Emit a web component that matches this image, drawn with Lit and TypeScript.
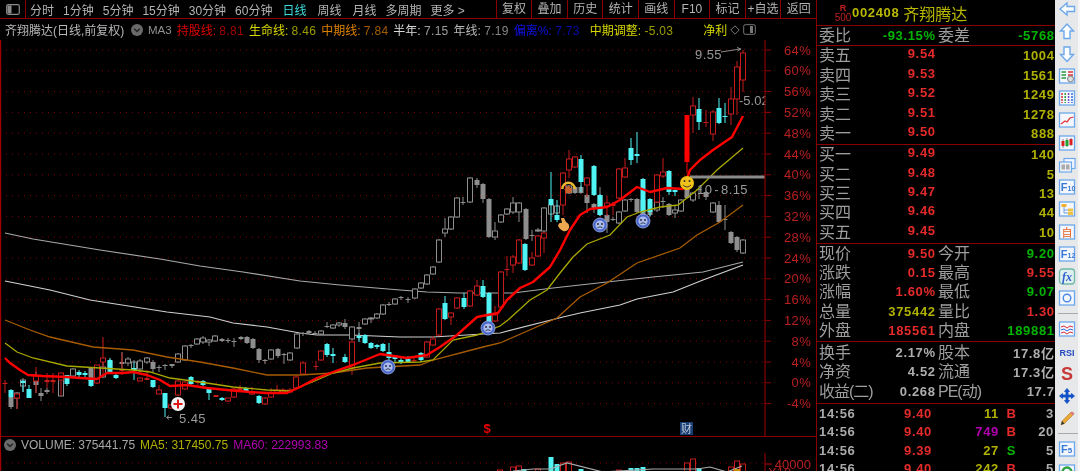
import { LitElement, html, css, svg } from "lit";
import { customElement } from "lit/decorators.js";

type C = [number, number, number, number, number, string];

const GRAY: C[] = [
  [11,396,397,407,409,"G"],[17,392,393,398,409,"g"],[23,378,380,386,392,"g"],[36,372,376,385,393,"G"],
  [41,388,393,396,401,"G"],[47,388,390,392,394,"G"],[61,373,374,396,396,"g"],[73,368,369,376,377,"g"],
  [91,367,368,381,386,"G"],[103,362,367,377,378,"g"],[110,359,361,368,372,"G"],[122,352,362,364,368,"G"],
  [128,357,359,363,366,"g"],[134,360,362,370,372,"g"],[140,359,361,369,372,"g"],[147,357,358,362,364,"g"],
  [153,360,362,369,372,"G"],[159,365,367,368,372,"G"],[165,364,365,366,370,"G"],[172,364,364,366,368,"G"],
  [178,353,354,362,363,"g"],[185,345,346,360,361,"g"],[191,344,345,346,348,"G"],[197,338,339,344,345,"g"],
  [203,336,338,342,344,"g"],[209,339,340,342,346,"g"],[215,335,336,341,342,"g"],[222,338,339,341,342,"G"],
  [228,338,340,341,343,"G"],[234,338,341,342,347,"G"],[241,336,337,339,340,"G"],[247,336,337,343,344,"G"],
  [253,338,339,348,349,"G"],[259,348,349,360,363,"G"],[265,359,360,361,364,"G"],[271,349,350,359,360,"g"],
  [278,348,349,356,358,"G"],[284,353,354,355,364,"G"],[290,352,353,360,361,"g"],[297,333,334,348,349,"g"],
  [303,332,333,334,336,"G"],[309,330,331,333,334,"G"],[315,331,333,334,335,"G"],[321,330,331,334,335,"g"],
  [327,322,326,327,328,"G"],[333,324,325,328,329,"g"],[339,322,323,325,327,"g"],[345,319,323,327,329,"G"],
  [352,326,327,339,340,"g"],[359,322,327,329,340,"G"],[365,318,319,324,325,"g"],[371,317,318,319,323,"g"],
  [377,313,314,318,319,"g"],[383,304,305,314,315,"g"],[389,302,304,305,306,"G"],[395,298,299,304,305,"g"],
  [401,296,297,298,300,"G"],[408,297,299,300,303,"G"],[415,288,289,298,299,"g"],[421,282,283,288,289,"g"],
  [427,274,275,284,285,"g"],[433,266,267,274,275,"g"],[439,239,240,262,263,"g"],[445,218,229,233,237,"g"],
  [451,216,217,229,230,"g"],[457,197,198,217,218,"g"],[463,197,202,203,205,"G"],[470,177,178,202,203,"g"],
  [477,178,180,185,188,"G"],[483,183,184,199,203,"G"],[489,198,199,237,238,"G"],[495,222,231,237,240,"g"],
  [501,214,215,222,223,"g"],[507,208,209,214,215,"g"],[513,197,203,212,214,"g"],[519,202,203,212,222,"g"],
  [526,208,209,239,240,"G"],[532,230,235,236,241,"G"],[538,228,230,231,232,"g"],[544,207,208,231,232,"g"],
  [551,204,205,214,215,"g"],[557,205,206,213,214,"g"],[563,190,192,200,202,"g"],[569,185,186,193,194,"g"],
  [575,186,187,193,194,"G"],[581,186,187,193,194,"G"],[587,194,195,203,213,"G"],[594,203,204,208,213,"G"],
  [600,187,195,215,216,"G"],[607,214,215,222,233,"G"],[613,217,219,220,221,"G"],[619,211,212,223,224,"g"],
  [625,199,200,211,212,"g"],[631,198,199,200,202,"G"],[637,198,199,212,213,"G"],[643,199,200,216,217,"G"],
  [650,209,210,215,217,"G"],[657,201,202,210,212,"g"],[663,197,201,202,208,"G"],[669,203,204,215,216,"G"],
  [675,205,210,213,218,"g"],[681,199,200,211,212,"g"],[687,188,189,198,199,"G"],[693,192,193,200,202,"g"],
  [699,188,189,190,199,"G"],[706,191,192,197,200,"G"],[713,202,203,212,213,"g"],[719,201,205,222,223,"G"],
  [725,205,219,220,230,"G"],[731,231,232,243,244,"G"],[737,236,237,250,252,"G"],[743,239,240,253,254,"g"],
];

const COLOR: C[] = [
  [5,380,383,384,393,"R"],[11,389,390,397,398,"c"],[17,393,394,398,409,"r"],[23,380,381,383,392,"c"],
  [29,385,389,398,398,"c"],[36,367,376,381,393,"r"],[47,373,380,382,388,"R"],[53,373,380,382,393,"R"],
  [61,373,373,380,396,"r"],[67,375,375,384,386,"c"],[79,370,372,375,377,"c"],[85,371,373,375,378,"c"],
  [91,380,380,386,387,"c"],[97,365,365,383,384,"r"],[103,337,358,362,377,"r"],[110,358,360,373,373,"c"],
  [116,373,375,378,379,"c"],[122,353,369,371,375,"R"],[134,362,368,370,380,"c"],[140,378,378,381,381,"r"],
  [147,370,378,380,380,"R"],[153,380,380,387,388,"c"],[159,385,390,394,394,"r"],[165,393,393,408,417,"c"],
  [171,404,405,408,409,"r"],[178,380,381,395,396,"r"],[185,381,382,389,390,"r"],[191,376,377,384,385,"c"],
  [198,380,381,383,385,"R"],[203,380,381,385,387,"c"],[209,388,389,393,400,"c"],[216,395,395,397,397,"R"],
  [222,397,398,400,401,"c"],[228,398,398,401,402,"r"],[234,387,389,397,398,"r"],[240,385,388,390,391,"R"],
  [246,387,388,391,392,"c"],[252,387,392,394,395,"r"],[259,395,396,403,404,"c"],[265,397,398,404,405,"r"],
  [271,388,393,397,398,"r"],[277,385,390,393,394,"r"],[283,388,390,392,393,"r"],[290,388,390,392,392,"r"],
  [296,375,377,388,389,"r"],[303,361,363,374,375,"r"],[316,361,366,367,370,"R"],[321,350,351,360,361,"r"],
  [327,343,344,355,357,"c"],[333,348,354,356,363,"c"],[345,354,357,362,363,"c"],[352,340,342,368,375,"r"],
  [359,333,336,338,342,"c"],[365,334,335,343,344,"c"],[371,342,343,348,349,"c"],[377,344,345,347,349,"c"],
  [383,343,344,351,352,"c"],[389,343,352,358,360,"c"],[395,356,357,359,362,"c"],[401,358,360,362,364,"c"],
  [408,356,359,362,363,"c"],[414,358,360,361,362,"R"],[421,352,353,360,362,"c"],[427,341,342,357,358,"r"],
  [433,336,339,345,346,"r"],[439,308,309,335,336,"r"],[445,296,303,319,320,"c"],[451,312,313,317,325,"r"],
  [457,297,298,308,309,"r"],[464,293,298,307,309,"c"],[470,290,291,306,307,"r"],[477,280,286,295,296,"r"],
  [483,280,286,297,298,"c"],[489,292,293,322,323,"c"],[495,306,315,321,322,"r"],[501,271,272,307,308,"r"],
  [507,256,269,270,276,"R"],[513,255,257,265,273,"r"],[519,239,240,263,264,"r"],[525,243,244,270,271,"c"],
  [532,252,258,265,266,"r"],[538,235,236,256,257,"r"],[544,232,233,238,253,"r"],[551,172,199,205,222,"c"],
  [557,200,215,220,222,"c"],[563,172,173,205,215,"r"],[569,150,159,170,178,"r"],[575,156,157,167,168,"r"],
  [581,155,159,182,192,"c"],[587,177,178,185,197,"r"],[594,165,166,195,196,"c"],[600,194,195,215,216,"c"],
  [607,196,203,206,216,"r"],[613,202,204,206,215,"R"],[619,168,169,198,199,"r"],[625,158,168,177,178,"r"],
  [631,138,148,160,165,"c"],[637,132,154,156,163,"c"],[643,178,179,212,213,"c"],[650,198,199,212,216,"c"],
  [657,174,175,202,203,"r"],[663,158,172,176,178,"r"],[669,170,171,192,195,"c"],[675,188,190,192,196,"c"],
  [687,115,115,162,173,"F"],[693,97,106,115,133,"r"],[699,98,109,122,130,"c"],[706,110,122,123,127,"R"],
  [713,110,112,134,141,"r"],[719,98,108,123,124,"c"],[725,103,116,117,123,"c"],[731,87,99,114,125,"r"],
  [737,61,67,99,115,"r"],[743,50,53,80,92,"r"],
];

const RED = "5,358 10,363 20,370 28,375 43,376 67,377 80,378 97,379 107,373 123,373 133,372 147,375 160,380 170,386 187,385 207,388 227,390 250,392 267,393 287,393 300,387 317,378 333,372 353,365 380,354 407,358 427,355 440,347 457,335 477,317 498,313 507,300 520,288 533,282 550,267 560,250 570,230 580,215 590,209 607,207 620,200 637,187 650,192 667,188 683,189 690,170 700,160 713,150 732,137 743,116";
const YEL = "5,343 17,352 33,358 67,366 100,368 133,370 150,372 170,378 200,382 233,387 267,390 290,391 317,380 333,373 353,368 380,363 420,362 433,360 453,340 477,335 500,326 508,320 530,300 547,290 560,273 573,257 587,244 610,235 627,217 640,212 660,207 678,205 697,190 717,170 743,148";
const ORG = "5,320 30,330 50,337 93,347 133,350 167,357 200,362 233,368 267,375 300,375 333,373 367,368 420,365 433,360 483,347 500,343 557,318 580,297 607,283 637,263 680,248 697,235 720,222 743,205";
const WH1 = "5,233 33,239 100,250 160,259 200,266 243,272 300,281 340,285 400,290 427,292 460,293 513,293 553,288 607,282 653,277 703,272 743,262";
const WH2 = "5,281 50,290 90,300 167,312 210,317 233,323 267,327 300,333 317,335 350,335 400,337 433,337 500,333 563,317 580,313 620,305 637,299 673,292 703,280 743,265";

const VOLB: [number, number, string][] = [[500,470,"r"],[513,467,"r"],[519,466,"r"],[524,469,"c"],[538,469,"r"],[551,457,"c"],[557,464,"c"],[563,463,"r"],[569,462,"r"],[581,469,"c"],[619,470,"r"],[631,468,"c"],[637,468,"c"],[643,467,"c"],[687,463,"r"],[693,459,"r"],[699,468,"c"],[731,467,"r"],[737,461,"r"],[743,464,"r"]];

const TICKS = [64,60,56,52,48,44,40,36,32,28,24,20,16,12,8,4,0,-4];
const yOf = (p: number) => 50 + ((64 - p) / 4) * 20.8;

function candle(c: C) {
  const [x, hi, top, bot, lo, k] = c;
  const col = k === "g" || k === "G" ? "#8e8e8e" : k === "c" ? "#50f4f4" : k === "F" ? "#ff0000" : "#c41c1c";
  const solid = k === "G" || k === "c" || k === "R" || k === "F";
  return svg`<line x1=${x} x2=${x} y1=${hi} y2=${lo} stroke=${col} stroke-width="1"></line>
    <rect x=${x - 2.5} y=${top} width="5" height=${Math.max(bot - top, 1)} fill=${solid ? col : "#000"} stroke=${col} stroke-width=${solid ? 0 : 1}></rect>`;
}

function sad(x: number, y: number) {
  return svg`<circle cx=${x} cy=${y} r="7" fill="#4a66c8" stroke="#9fb2ee" stroke-width="0.8"></circle>
    <circle cx=${x} cy=${y} r="4.6" fill="#a9bcec"></circle>
    <circle cx=${x - 2} cy=${y - 1} r="0.9" fill="#223"></circle><circle cx=${x + 2} cy=${y - 1} r="0.9" fill="#223"></circle>
    <path d="M${x - 2.5} ${y + 2.8} Q${x} ${y + 0.6} ${x + 2.5} ${y + 2.8}" fill="none" stroke="#223" stroke-width="0.8"></path>`;
}

const chartSvg = svg`
  ${TICKS.map((p) => svg`<line x1="0" x2="765" y1=${yOf(p)} y2=${yOf(p)} stroke="#8a0000" stroke-width="1" stroke-dasharray="1 5"></line>
    <line x1="765" x2="771" y1=${yOf(p)} y2=${yOf(p)} stroke="#8a0000"></line>
    <text x="811" y=${yOf(p) + 4.5} text-anchor="end" class="ax">${p}%</text>`)}
  <line x1="0.5" x2="0.5" y1="40" y2="436" stroke="#a00000" stroke-width="1.4"></line>
  <polyline points=${WH1} fill="none" stroke="#a8a8a8" stroke-width="1.2"></polyline>
  <polyline points=${WH2} fill="none" stroke="#cfcfcf" stroke-width="1.2"></polyline>
  ${GRAY.map(candle)}
  ${COLOR.map(candle)}
  <polyline points=${ORG} fill="none" stroke="#a85c00" stroke-width="1.3"></polyline>
  <polyline points=${YEL} fill="none" stroke="#a8a800" stroke-width="1.3"></polyline>
  <polyline points=${RED} fill="none" stroke="#ff0000" stroke-width="2.4" stroke-linejoin="round"></polyline>
  <line x1="690" x2="765" y1="177" y2="177" stroke="#8a8a8a" stroke-width="3"></line>
  ${sad(388, 367)}${sad(488, 328)}${sad(600, 225)}${sad(643, 221)}
  <circle cx="687" cy="183" r="7" fill="#f2c21a"></circle>
  <circle cx="684.5" cy="181" r="1" fill="#333"></circle><circle cx="689.5" cy="181" r="1" fill="#333"></circle>
  <path d="M683 185 Q687 189 691 185" fill="none" stroke="#333" stroke-width="0.9"></path>
  <path d="M561 189 A7.5 7.5 0 0 1 576 189 L573.5 189 A5 5 0 0 0 563.5 189 Z" fill="#e8b830"></path>
  <path d="M564 190 L568.5 185.5 L573 190 L571.5 190 L571.5 193 L565.5 193 L565.5 190 Z" fill="#c8602a"></path>
  <path d="M558 226 Q559 222 562 223 L561 218 L564 218 L566 222 Q570 224 569 228 Q567 232 563 231 Q560 230 558 226 Z" fill="#f0a850"></path>
  <circle cx="178" cy="404" r="7" fill="#f4f4f4"></circle>
  <path d="M178 399.5 V408.5 M173.5 404 H182.5" stroke="#e01818" stroke-width="2"></path>
  <path d="M172 417.5 H167 M169 415.5 L166.5 417.5 L169 419.5" fill="none" stroke="#999" stroke-width="0.9"></path>
  <text x="179" y="423" class="lb">5.45</text>
  <text x="695" y="59" class="lb">9.55</text>
  <path d="M721 52 L740 49 M737 47.5 L741 49 L737.5 51" fill="none" stroke="#999" stroke-width="0.9"></path>
  <text x="739" y="105" class="lb tight">-5.02</text>
  <rect x="765.6" y="92" width="8" height="16" fill="#000"></rect>
  ${[52, 56].map((p) => svg`<line x1="765" x2="771" y1=${yOf(p)} y2=${yOf(p)} stroke="#8a0000"></line>`)}
  <line x1="765" x2="765" y1="40" y2="436" stroke="#8a0000" stroke-width="1.2"></line>
  <text x="697" y="194" class="lb wsp">10 - 8.15</text>
  <text x="487" y="433" text-anchor="middle" class="s">$</text>
  <circle cx="487" cy="425" r="1" fill="#e00000"></circle>
  <rect x="680" y="422" width="13" height="13" fill="#173f75"></rect>
  <text x="686.5" y="433" text-anchor="middle" class="cai">财</text>
`;

const volSvg = svg`
  <line x1="0" x2="765" y1="463" y2="463" stroke="#8a0000" stroke-dasharray="1 5"></line>
  <line x1="765" x2="765" y1="453" y2="471" stroke="#8a0000" stroke-width="1.2"></line>
  <line x1="0.5" x2="0.5" y1="453" y2="471" stroke="#a00000" stroke-width="1.4"></line>
  <line x1="765" x2="772" y1="464" y2="464" stroke="#8a0000" stroke-width="1.4"></line>
  <text x="811" y="469" text-anchor="end" class="ax2">40000</text>
  <text x="768" y="477" class="ax2">X10</text>
  ${VOLB.map(([x, y, k]) => svg`<rect x=${x - 2.5} y=${y} width="5" height="20" fill=${k === "c" ? "#50f4f4" : "#000"} stroke=${k === "c" ? "none" : "#c41c1c"}></rect>`)}
  <polyline points="513,471 533,469 550,469 567,463 603,472 653,469 697,469 710,467 727,472 742,466" fill="none" stroke="#a8a8a8" stroke-width="1.2"></polyline>
  <rect x="734" y="469" width="6" height="3" fill="#c88a00"></rect>
`;

const box = (inner: unknown, col = "#6ea8ec", fill = "#f4f8fe") => svg`<rect x="1.5" y="2" width="15" height="14" fill=${fill} stroke=${col} stroke-width="1.3"></rect>${inner}`;
const ICONS: unknown[] = [
  svg`<path d="M2 9 L9 3 V6.5 H16.5 V11.5 H9 V15 Z" fill="#fbfdff" stroke="#6ea8ec" stroke-width="1.4"></path>`,
  svg`<path d="M9 2 L15.5 9 H12 V16.5 H6 V9 H2.5 Z" fill="#fbfdff" stroke="#6ea8ec" stroke-width="1.4"></path>`,
  svg`<path d="M9 16.5 L15.5 9.5 H12 V2 H6 V9.5 H2.5 Z" fill="#fbfdff" stroke="#6ea8ec" stroke-width="1.4"></path>`,
  box(svg`<path d="M3.5 5 H8 M3.5 8 H8 M3.5 11 H8" stroke="#2a9a3a" stroke-width="1.6"></path><path d="M10 5 H15 M10 8 H15" stroke="#d83030" stroke-width="1.6"></path><circle cx="12.5" cy="12" r="3" fill="#ddd" stroke="#666" stroke-width="0.8"></circle>`),
  box(svg`<path d="M4 4 V14" stroke="#d83030" stroke-width="1.5" stroke-dasharray="2 1"></path><path d="M7.2 4 V14" stroke="#30a040" stroke-width="1.5" stroke-dasharray="2 1"></path><path d="M10.6 4 V14" stroke="#7050c8" stroke-width="1.5" stroke-dasharray="2 1"></path><path d="M14 4 V14" stroke="#3068d8" stroke-width="1.5" stroke-dasharray="2 1"></path>`),
  box(svg`<path d="M3 13 L7 10 L9 11 L12 7 L15.5 6" fill="none" stroke="#e83838" stroke-width="1.3"></path>`),
  box(svg`<path d="M5 5 V14 M9 4 V13 M13 4 V12" stroke="#555" stroke-width="0.7"></path><rect x="3.5" y="7" width="3" height="5" fill="#d82020"></rect><rect x="7.5" y="6" width="3" height="6" fill="#22a030"></rect><rect x="11.5" y="5" width="3" height="6" fill="#d82020"></rect>`),
  svg`<rect x="6" y="2.5" width="11" height="10" fill="#f4f8fe" stroke="#6ea8ec" stroke-width="1.2"></rect><rect x="1.5" y="6" width="12" height="10" fill="#eef2f8" stroke="#6ea8ec" stroke-width="1.2"></rect><rect x="3.5" y="8.5" width="3.5" height="5" fill="#aaa"></rect><rect x="8" y="8.5" width="3.5" height="5" fill="#aaa"></rect>`,
  box(svg`<text x="2.8" y="13" class="i1">F<tspan font-size="7">10</tspan></text>`),
  box(svg`<rect x="3.5" y="4" width="5" height="3" fill="#f0b030"></rect><path d="M6 7 V13 H10 M6 10 H10" stroke="#70a0e0" fill="none"></path><rect x="10" y="8.5" width="5" height="3" fill="#f0c040"></rect><rect x="10" y="12" width="5" height="3" fill="#f0c040"></rect>`),
  box(svg`<text x="9" y="13.5" text-anchor="middle" class="i3">自</text>`),
  box(svg`<text x="2.8" y="13" class="i1">F<tspan font-size="7">12</tspan></text>`),
  svg`<rect x="1.5" y="2" width="15" height="15" rx="3" fill="#dff0ee" stroke="#70b8a8" stroke-width="1.3"></rect><text x="9" y="14" text-anchor="middle" class="i2">fx</text>`,
  box(svg`<circle cx="9" cy="9" r="3.8" fill="none" stroke="#4a88e0" stroke-width="1.4"></circle>`),
  "sep",
  box(svg`<path d="M3 7 L6 6 L9 8 L12 6 L15 7" fill="none" stroke="#d83030" stroke-width="1"></path><path d="M3 10 L6 9 L9 11 L12 9 L15 10" fill="none" stroke="#3868d8" stroke-width="1"></path><path d="M3 13 L6 12 L9 14 L12 12 L15 13" fill="none" stroke="#d83030" stroke-width="1"></path>`),
  svg`<text x="9" y="13" text-anchor="middle" class="i4">RSI</text>`,
  svg`<text x="9" y="15" text-anchor="middle" class="i5">S</text>`,
  svg`<path d="M9 1.5 L11.5 4.5 H10 V8 H13.5 V6.5 L16.5 9 L13.5 11.5 V10 H10 V13.5 H11.5 L9 16.5 L6.5 13.5 H8 V10 H4.5 V11.5 L1.5 9 L4.5 6.5 V8 H8 V4.5 H6.5 Z" fill="#1050c8" stroke="#1050c8" stroke-width="0.8"></path>`,
  svg`<path d="M3 16 L4 12 L13 3 L15.5 5.5 L6.5 14.5 Z" fill="#e8a838" stroke="#a87020" stroke-width="0.5"></path><path d="M12 4 L13.3 2.7 Q14 2 15 3 L16 4 Q16.6 4.8 16 5.4 L14.7 6.6 Z" fill="#d88080"></path><path d="M3 16 L4 12 L6.5 14.5 Z" fill="#333"></path>`,
  "sep",
  box(svg`<text x="3" y="13" class="i1">F<tspan font-size="8">5</tspan></text>`),
  box(svg`<path d="M5 11 A4.5 4.5 0 1 1 9 13.5" fill="none" stroke="#30a040" stroke-width="2.4"></path>`),
];

@customElement("app-root")
export class AppRoot extends LitElement {
  static styles = css`
    :host { display: block; width: 1080px; height: 471px; overflow: hidden; background: #000; }
    * { box-sizing: border-box; }
    .root { display: flex; width: 1080px; height: 471px; overflow: hidden; background: #000; filter: blur(0.35px);
      font-family: "Liberation Sans", "Noto Sans CJK SC", sans-serif; color: #b0b0b0; }
    .left { width: 817px; flex: none; display: flex; flex-direction: column; border-right: 1px solid #8a0000; }
    .bar { height: 19px; flex: none; display: flex; align-items: center; border-bottom: 1px solid #8a0000; font-size: 12px; color: #b4b4b4; }
    .logo { width: 26px; height: 18px; flex: none; display: flex; align-items: center; justify-content: center; border-right: 1px solid #8a0000; }
    .tabs { display: flex; gap: 9px; padding-left: 4px; flex: 1; white-space: nowrap; }
    .tabs .on { color: #40dcdc; margin: 0 2px 0 1px; }
    .tabs .wk { margin-right: 2px; }
    .tabs .mo { margin-right: 0; }
    .cells { display: flex; flex: none; }
    .cells span { width: 35.6px; height: 18px; line-height: 18px; text-align: center; border-left: 1px solid #8a0000; white-space: nowrap; }
    .legend { height: 21px; flex: none; display: flex; align-items: center; font-size: 12px; white-space: nowrap; padding-left: 5px; overflow: hidden; }
    .legend > span { margin-right: 5px; flex: none; }
    .legend i, .vhead i { font-style: normal; opacity: 0.72; letter-spacing: 0.3px; }
    .legend .name { color: #b8b8b8; width: 126px; margin-right: 0; }
    .legend .ma { color: #909090; font-size: 11.5px; margin-left: 5px; }
    .legend .gap1 { margin-left: 5px; }
    .legend .gap2 { margin-left: 25px; margin-right: 3px; }
    .legend .gap3 { margin-left: 3px; }
    .chev { width: 12px; height: 12px; flex: none; }
    .chart { width: 816px; height: 396px; flex: none; display: block; }
    .vhead { height: 17px; flex: none; display: flex; align-items: center; gap: 5px; padding-left: 3px; font-size: 12px; white-space: nowrap; border-top: 1px solid #8a0000; border-left: 1.4px solid #a00000; }
    .vol { width: 816px; height: 18px; flex: none; display: block; }
    .ax { font: 13px "Liberation Sans", sans-serif; fill: #b82020; letter-spacing: 0.3px; }
    .ax2 { font: 13px "Liberation Sans", sans-serif; fill: #b82020; }
    .lb { font: 13px "Liberation Sans", sans-serif; fill: #9a9a9a; letter-spacing: 0.4px; }
    .lb.tight { letter-spacing: 0; }
    .lb.wsp { word-spacing: -2px; }
    .s { font: bold 13px "Liberation Sans", sans-serif; fill: #e00000; }
    .cai { font: 11px "Noto Sans CJK SC", sans-serif; fill: #c0c8d8; }
    .panel { width: 238px; flex: none; display: flex; flex-direction: column; overflow: hidden; }
    .head { height: 26px; flex: none; display: flex; align-items: center; border-bottom: 1.5px solid #8a0000; color: #b8b800; }
    .rr { width: 18px; margin-left: 17px; display: flex; flex-direction: column; align-items: center; color: #c02020; font-size: 10px; line-height: 10px; }
    .rr b { font-size: 9px; }
    .code { font-size: 13px; font-weight: bold; letter-spacing: 0.65px; margin-right: 4px; }
    .cn { font-size: 16px; }
    .sec { flex: none; border-bottom: 1.5px solid #8a0000; display: flex; flex-direction: column; justify-content: center; }
    .h20 { height: 20px; } .h98 { height: 98px; } .h985 { height: 98.5px; } .h99 { height: 99px; } .h62 { height: 62px; }
    .row { height: 19.4px; display: grid; grid-template-columns: 116px 1fr; align-items: center; padding-left: 2px; padding-right: 1px; }
    .row4 { grid-template-columns: 40px 76px 51px 1fr; }
    .l { font-size: 16px; color: #9e9e9e; line-height: 19px; white-space: nowrap; }
    .l.nar { letter-spacing: -1px; }
    .v { font-size: 13px; font-weight: bold; letter-spacing: 0.65px; text-align: right; white-space: nowrap; margin-right: -0.65px; }
    .n { padding-left: 3px; }
    .ar { display: grid; grid-template-columns: 40px 76px; }
    .red { color: #e42a2a; } .yel { color: #b0b000; } .grn { color: #00b400; } .gry { color: #aeaeae; } .mag { color: #b000b0; }
    .ticks { flex: 1; overflow: hidden; padding-top: 1px; }
    .t { height: 18.3px; display: grid; grid-template-columns: 36px 77px 67px 24px 1fr; align-items: center; padding-left: 2px; padding-right: 1px; font-size: 13px; font-weight: bold; letter-spacing: 0.65px; }
    .t span { text-align: right; white-space: nowrap; }
    .t .tm { text-align: left; color: #aaa; }
    .t .bs { text-align: center; padding-left: 1px; }
    .side { flex: 1; display: flex; flex-direction: column; align-items: flex-start; background: #e6e8ea; overflow: hidden; padding: 0 0 0 3px; box-shadow: inset -2px 0 0 #f6f6f6; }
    .ic { width: 18px; height: 18px; flex: none; margin-bottom: 4.25px; display: block; }
    .sp { width: 20px; height: 1px; background: #aaa; flex: none; margin: 1.5px 0 6.25px; }
    .i1 { font: bold 11px "Liberation Sans", sans-serif; fill: #3878d8; }
    .i2 { font: italic bold 12px "Liberation Serif", serif; fill: #3060d0; }
    .i3 { font: 11px "Noto Sans CJK SC", sans-serif; fill: #e86020; }
    .i4 { font: bold 9px "Liberation Sans", sans-serif; fill: #2048c0; }
    .i5 { font: bold 18px "Liberation Sans", sans-serif; fill: #c83838; }
  `;

  private chevron() {
    return html`<svg class="chev" viewBox="0 0 12 12"><circle cx="6" cy="6" r="6" fill="#6a6a6a"></circle><path d="M3.2 4.8 L6 7.6 L8.8 4.8" fill="none" stroke="#222" stroke-width="1.4"></path></svg>`;
  }

  private ab(label: string, price: string, vol: string) {
    return html`<div class="row"><div class="ar"><span class="l">${label}</span><span class="v red">${price}</span></div><span class="v yel">${vol}</span></div>`;
  }

  private r4(a: string, b: string, bc: string, c: string, d: string, dc: string, nar = false) {
    return html`<div class="row row4"><span class="l ${nar ? "nar" : ""}">${a}</span><span class="v ${bc}">${b}</span><span class="l n ${nar ? "nar" : ""}">${c}</span><span class="v ${dc}">${d}</span></div>`;
  }

  private tick(p: string, v: string, vc: string, b: string, n: string) {
    return html`<div class="t"><span class="tm">14:56</span><span class="red">${p}</span><span class=${vc}>${v}</span><span class="bs ${b === "B" ? "red" : "grn"}">${b}</span><span class="gry">${n}</span></div>`;
  }

  render() {
    return html`<div class="root">
      <div class="left">
        <div class="bar">
          <div class="logo"><svg width="14" height="11" viewBox="0 0 14 11"><rect x="0.7" y="0.7" width="12.6" height="9.6" rx="1.5" fill="none" stroke="#8a8a8a" stroke-width="1.2"></rect><rect x="1.5" y="1.5" width="4" height="8" fill="#8a8a8a"></rect></svg></div>
          <div class="tabs">
            <span>分时</span><span>1分钟</span><span>5分钟</span><span>15分钟</span><span>30分钟</span><span>60分钟</span><span class="on">日线</span><span class="wk">周线</span><span class="mo">月线</span><span>多周期</span><span>更多 &gt;</span>
          </div>
          <div class="cells"><span>复权</span><span>叠加</span><span>历史</span><span>统计</span><span>画线</span><span>F10</span><span>标记</span><span>+自选</span><span>返回</span></div>
        </div>
        <div class="legend">
          <span class="name">齐翔腾达(日线,前复权)</span>
          ${this.chevron()}
          <span class="ma">MA3</span>
          <span style="color:#e00000">持股线: <i>8.81</i></span>
          <span style="color:#d8d800">生命线: <i>8.46</i></span>
          <span style="color:#e08000">中期线: <i>7.84</i></span>
          <span style="color:#d8d8d8">半年: <i>7.15</i></span>
          <span style="color:#b8b8b8">年线: <i>7.19</i></span>
          <span style="color:#1010e8">偏离%: <i>7.73</i></span>
          <span class="gap1" style="color:#d8d800">中期调整: <i>-5.03</i></span>
          <span class="gap2" style="color:#d8d800">净利</span>
          <svg width="10" height="10" viewBox="0 0 10 10"><path d="M5 .8 L9.2 5 L5 9.2 L.8 5 Z" fill="none" stroke="#777"></path></svg>
          <svg class="gap3" width="13" height="11" viewBox="0 0 13 11"><rect x=".7" y=".7" width="11.6" height="9.6" rx="1.5" fill="none" stroke="#777"></rect><rect x="7" y="2" width="3" height="7" fill="#777"></rect></svg>
        </div>
        <svg class="chart" viewBox="0 40 816 396">${chartSvg}</svg>
        <div class="vhead">
          ${this.chevron()}
          <span style="color:#a8a8a8">VOLUME: 375441.75</span>
          <span style="color:#b0b000">MA5: 317450.75</span>
          <span style="color:#b000b0">MA60: 222993.83</span>
        </div>
        <svg class="vol" viewBox="0 453 816 18">${volSvg}</svg>
      </div>
      <div class="panel">
        <div class="head">
          <div class="rr"><b>R</b><span>500</span></div>
          <span class="code">002408</span><span class="cn">齐翔腾达</span>
        </div>
        <div class="sec h20">
          ${this.r4("委比","-93.15%","grn","委差","-5768","grn")}
        </div>
        <div class="sec h985">
          ${this.ab("卖五","9.54","1004")}${this.ab("卖四","9.53","1561")}${this.ab("卖三","9.52","1249")}${this.ab("卖二","9.51","1278")}${this.ab("卖一","9.50","888")}
        </div>
        <div class="sec h99">
          ${this.ab("买一","9.49","140")}${this.ab("买二","9.48","5")}${this.ab("买三","9.47","13")}${this.ab("买四","9.46","44")}${this.ab("买五","9.45","10")}
        </div>
        <div class="sec h98">
          ${this.r4("现价","9.50","red","今开","9.20","grn")}
          ${this.r4("涨跌","0.15","red","最高","9.55","red")}
          ${this.r4("涨幅","1.60%","red","最低","9.07","grn")}
          ${this.r4("总量","375442","yel","量比","1.30","red")}
          ${this.r4("外盘","185561","red","内盘","189881","grn")}
        </div>
        <div class="sec h62">
          ${this.r4("换手","2.17%","gry","股本","17.8亿","gry")}
          ${this.r4("净资","4.52","gry","流通","17.3亿","gry")}
          ${this.r4("收益(二)","0.268","gry","PE(动)","17.7","gry",true)}
        </div>
        <div class="ticks">
          ${this.tick("9.40","11","yel","B","3")}
          ${this.tick("9.40","749","mag","B","20")}
          ${this.tick("9.39","27","yel","S","5")}
          ${this.tick("9.40","242","yel","B","5")}
        </div>
      </div>
      <div class="side">
        ${ICONS.map((i) => i === "sep" ? html`<div class="sp"></div>` : html`<svg class="ic" viewBox="0 0 18 18">${i}</svg>`)}
      </div>
    </div>`;
  }
}
